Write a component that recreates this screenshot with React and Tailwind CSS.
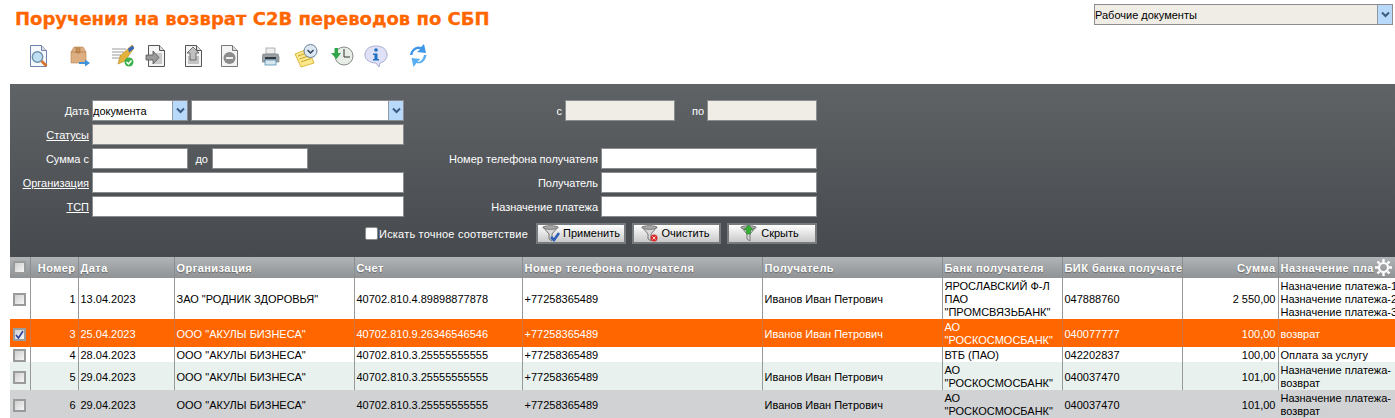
const font = { fontFamily: '"Liberation Sans", Tahoma, sans-serif' };

const ArrowBox = () => (
  <span className="flex w-[15px] shrink-0 items-center justify-center self-stretch border-l border-[#8f9aa3] bg-[#b9d9fb]">
    <svg width="9" height="7" viewBox="0 0 9 7">
      <path d="M1 1.5 4.5 5 8 1.5" fill="none" stroke="#3d5a80" strokeWidth="2" />
    </svg>
  </span>
);

const Field = ({ className = "", muted, text, arrow }) => (
  <div
    className={`flex h-[21px] shrink-0 items-center border border-[#8a8d8f] text-[11px] text-black ${
      muted ? "bg-[#f0ede6]" : "bg-white"
    } ${className}`}
  >
    <span className="flex-1 overflow-hidden whitespace-nowrap pt-[2px]">{text}</span>
    {arrow && <ArrowBox />}
  </div>
);

const Label = ({ children, link, className = "" }) => (
  <span
    className={`shrink-0 whitespace-nowrap pt-[2px] text-right text-[11px] text-white ${
      link ? "underline" : ""
    } ${className}`}
  >
    {children}
  </span>
);

const Doc = ({ children, stroke = "#6b6b6b", fill = "#f4f4f4" }) => (
  <>
    <path d="M3.5 1.500h11l5 5v16h-16z" fill={fill} stroke={stroke} />
    <path d="M14.500 1.500v5h5" fill="#dcdcdc" stroke={stroke} />
    {children}
  </>
);

const toolbar = [
  {
    gap: "ml-[12px]",
    svg: (
      <Doc stroke="#6f83ab" fill="#f5f8fc">
        <circle cx="10.500" cy="13" r="5.200" fill="#bfe0f5" stroke="#6d8fa8" strokeWidth="1.400" />
        <path d="m14.500 17 5 5" stroke="#d9722b" strokeWidth="2.600" />
      </Doc>
    ),
  },
  {
    gap: "ml-[19px]",
    svg: (
      <>
        <path d="M1 8 4 3h9l3 5v11H1z" fill="#dcae80" stroke="#b98552" strokeWidth="0.600" />
        <path d="M1 8h15M6 3v6h4V3" fill="#c98f58" stroke="#a97745" strokeWidth="0.600" />
        <path d="M9 18h6v-2.500l5 3.500-5 3.500V20H9z" fill="#3f93dc" />
      </>
    ),
  },
  {
    gap: "ml-[17px]",
    svg: (
      <>
        <path d="M1 5h14M1 8h12M1 11h9M1 14h7" stroke="#9a9a9a" />
        <path d="M21 1 9 12l-2 8 7-3L23 4z" fill="#e3b23c" stroke="#b58a22" strokeWidth="0.600" />
        <path d="m17 4.500 5-3 1 3-5 4z" fill="#3765b5" />
        <circle cx="18" cy="18" r="4.500" fill="#3cb04a" />
        <path d="m15.500 18 2 2 3-3.500" fill="none" stroke="#fff" strokeWidth="1.500" />
      </>
    ),
  },
  {
    gap: "ml-[10px]",
    svg: (
      <Doc stroke="#555">
        <rect x="9" y="9" width="8" height="11" fill="#c9c9c9" />
        <path d="M1 11h7V7l6 6.500L8 20v-4H1z" fill="#9a9a9a" stroke="#555" strokeWidth="0.800" />
      </Doc>
    ),
  },
  {
    gap: "ml-[13px]",
    svg: (
      <Doc stroke="#555">
        <rect x="6" y="12" width="11" height="8" fill="#c4c4c4" />
        <path d="M8 16V9H5l6-6 6 6h-3v7z" fill="#c0c0c0" stroke="#555" strokeWidth="0.800" />
      </Doc>
    ),
  },
  {
    gap: "ml-[12px]",
    svg: (
      <Doc stroke="#777">
        <circle cx="11.500" cy="14" r="6" fill="#8c8c8c" />
        <path d="M8 14h7" stroke="#eee" strokeWidth="2" />
      </Doc>
    ),
  },
  {
    gap: "ml-[20px]",
    svg: (
      <>
        <rect x="4" y="4" width="9" height="6" fill="#eee" stroke="#888" strokeWidth="0.600" />
        <path d="M1 10h15l1 3v5H0v-5z" fill="#9aa1a6" stroke="#777" strokeWidth="0.600" />
        <rect x="3" y="16" width="11" height="5" fill="#d8e6f0" stroke="#3f7fa8" strokeWidth="0.700" />
        <rect x="3" y="13" width="11" height="2" fill="#33383c" />
      </>
    ),
  },
  {
    gap: "ml-[8px]",
    svg: (
      <>
        <path d="M1 10 14 5l6 14-13 4z" fill="#fbe88c" stroke="#dcb93f" />
        <path d="m4 12 10-3.500M5.500 15l10-3.500M7 18l10-3.500" stroke="#c9a52e" />
        <circle cx="16.500" cy="7" r="6.500" fill="#dbe7f3" stroke="#6c7f96" />
        <path d="m13.500 6 3 3 3-3" fill="none" stroke="#33455e" strokeWidth="1.500" />
      </>
    ),
  },
  {
    gap: "ml-[12px]",
    svg: (
      <>
        <circle cx="14" cy="12" r="9" fill="#e8ede8" stroke="#7f8c84" />
        <path d="M14 5v8h6" fill="none" stroke="#333" />
        <path d="M8 4v5h3l-4.500 6L1 9h3.500V4z" fill="#2fa64a" />
      </>
    ),
  },
  {
    gap: "ml-[10px]",
    svg: (
      <>
        <path d="M12 2c6 0 11 3 11 9 0 4-3 7-7 8l-1 4-3-4C6 19 1 16 1 11c0-6 5-9 11-9z" fill="#dfe2f7" stroke="#a9aed0" />
        <circle cx="12" cy="6" r="1.800" fill="#1f6fc0" />
        <path d="M9 9.500h4.500V15H15v1.500H9V15h1.500v-4H9z" fill="#1f6fc0" />
      </>
    ),
  },
  {
    gap: "ml-[21px]",
    svg: (
      <>
        <path d="M1 11C2 5 7 1 12 3l3-3 2 9-9-1 3-2.500C8 4 4 7 3.500 11z" fill="#3f97ea" />
        <path d="M17.500 11c-1 6-5 9.500-10 8l-3 4-2-9 9 1-3 2.500c3 1 5.500-2 6.500-6.500z" fill="#5aaef2" />
      </>
    ),
  },
];

const Funnel = ({ badge }) => (
  <svg width="20" height="18" viewBox="0 0 20 18" className="shrink-0">
    <path d="M1 2h15l-6 7v7l-3-2V9z" fill="#d8d8d8" stroke="#777" />
    <ellipse cx="8.500" cy="2.500" rx="7.500" ry="1.800" fill="#a9a9a9" stroke="#777" />
    {badge === "check" && <path d="m9 12 3 3 5-7" fill="none" stroke="#2d5fb5" strokeWidth="2.500" />}
    {badge === "clear" && (
      <>
        <circle cx="13" cy="13" r="3.500" fill="#d92b2b" />
        <path d="m11.500 11.500 3 3m0-3-3 3" stroke="#fff" strokeWidth="0.800" />
      </>
    )}
    {badge === "up" && <path d="M8.500 0 13 5h-2.500v4h-4V5H4z" fill="#35b035" stroke="#1f7a1f" strokeWidth="0.500" />}
  </svg>
);

const Button = ({ children, badge, className = "" }) => (
  <div
    className={`flex h-[21px] items-center justify-center gap-px border-2 border-[#777b7e] bg-gradient-to-b from-white to-[#c9c9c9] text-[11px] text-black ${className}`}
  >
    <Funnel badge={badge} />
    {children}
  </div>
);

const Check = ({ checked }) => (
  <span className="flex h-[13px] w-[13px] items-center justify-center border-2 border-[#9a9b9b] bg-gradient-to-br from-[#cfcfcf] to-[#f7f7f7]">
    {checked && (
      <svg width="9" height="9" viewBox="0 0 9 9">
        <path d="m1 5 2.500 3L8 1" fill="none" stroke="#2b3f9e" strokeWidth="1.600" />
      </svg>
    )}
  </span>
);

const Gear = () => (
  <svg width="17" height="17" viewBox="0 0 17 17">
    <circle cx="8.500" cy="8.500" r="4.500" fill="none" stroke="#fff" strokeWidth="2.200" />
    <path
      d="M8.500 0v3M8.500 14v3M0 8.500h3M14 8.500h3M2.500 2.500l2 2M12.500 12.500l2 2M14.500 2.500l-2 2M4.500 12.500l-2 2"
      stroke="#fff"
      strokeWidth="2.400"
    />
  </svg>
);

const headers = [
  { t: "Номер", cls: "text-right" },
  { t: "Дата" },
  { t: "Организация" },
  { t: "Счет" },
  { t: "Номер телефона получателя" },
  { t: "Получатель" },
  { t: "Банк получателя" },
  { t: "БИК банка получателя" },
  { t: "Сумма", cls: "text-right" },
];

const rows = [
  {
    h: "h-[41px]",
    tone: "bg-white text-black",
    line: "border-[#999]",
    n: 1,
    date: "13.04.2023",
    org: 'ЗАО "РОДНИК ЗДОРОВЬЯ"',
    acc: "40702.810.4.89898877878",
    person: "Иванов Иван Петрович",
    bank: ["ЯРОСЛАВСКИЙ Ф-Л", "ПАО", '"ПРОМСВЯЗЬБАНК"'],
    bik: "047888760",
    sum: "2 550,00",
    note: ["Назначение платежа-1", "Назначение платежа-2", "Назначение платежа-3"],
  },
  {
    h: "h-[28px]",
    tone: "bg-[#ff6600] text-white",
    line: "border-[#d9743a]",
    n: 3,
    checked: true,
    date: "25.04.2023",
    org: 'ООО "АКУЛЫ БИЗНЕСА"',
    acc: "40702.810.9.26346546546",
    person: "Иванов Иван Петрович",
    bank: ["АО", '"РОСКОСМОСБАНК"'],
    bik: "040077777",
    sum: "100,00",
    note: ["возврат"],
  },
  {
    h: "h-[15px]",
    tone: "bg-white text-black",
    line: "border-[#999]",
    n: 4,
    date: "28.04.2023",
    org: 'ООО "АКУЛЫ БИЗНЕСА"',
    acc: "40702.810.3.25555555555",
    person: "",
    bank: ["ВТБ (ПАО)"],
    bik: "042202837",
    sum: "100,00",
    note: ["Оплата за услугу"],
  },
  {
    h: "h-[28px]",
    tone: "bg-[#e8f1ee] text-black",
    line: "border-[#999]",
    n: 5,
    date: "29.04.2023",
    org: 'ООО "АКУЛЫ БИЗНЕСА"',
    acc: "40702.810.3.25555555555",
    person: "Иванов Иван Петрович",
    bank: ["АО", '"РОСКОСМОСБАНК"'],
    bik: "040037470",
    sum: "101,00",
    note: ["Назначение платежа-", "возврат"],
  },
  {
    h: "h-[28px]",
    tone: "bg-[#d0d2d4] text-black",
    line: "border-[#d0d2d4]",
    n: 6,
    date: "29.04.2023",
    org: 'ООО "АКУЛЫ БИЗНЕСА"',
    acc: "40702.810.3.25555555555",
    person: "Иванов Иван Петрович",
    bank: ["АО", '"РОСКОСМОСБАНК"'],
    bik: "040037470",
    sum: "101,00",
    note: ["Назначение платежа-", "возврат"],
  },
];

const Cell = ({ line, className = "", children }) => (
  <td className={`overflow-hidden whitespace-nowrap border-l px-[2px] pb-0 pt-[2px] align-middle ${line} ${className}`}>
    {children}
  </td>
);

export default function App() {
  return (
    <div className="h-[418px] w-[1395px] overflow-hidden bg-white leading-[13px]" style={font}>
      <div className="flex h-[84px]">
        <div className="flex-1 pl-[15px]">
          <h1
            className="pt-[8px] text-[18px] font-bold leading-[22px] text-[#ff6600] [-webkit-text-stroke:0.3px_#ff6600]"
            style={{ fontFamily: '"DejaVu Sans", sans-serif' }}
          >
            Поручения на возврат C2B переводов по СБП
          </h1>
          <div className="mt-[14px] flex">
            {toolbar.map((item, i) => (
              <svg key={i} width="24" height="24" viewBox="0 0 24 24" className={`shrink-0 ${item.gap}`}>
                {item.svg}
              </svg>
            ))}
          </div>
        </div>
        <Field className="mr-[2px] mt-[4px] w-[299px]" muted text="Рабочие документы" arrow />
      </div>

      <div className="ml-[10px] h-[173px] bg-gradient-to-b from-[#5f6366] to-[#464a4e] pt-[16px]">
        <div className="flex h-[21px] items-center">
          <Label className="w-[79px]">Дата</Label>
          <Field className="ml-[3px] w-[96px]" text="документа" arrow />
          <Field className="ml-[3px] w-[213px]" arrow />
          <Label className="w-[158px]">с</Label>
          <Field className="ml-[3px] w-[110px]" muted />
          <Label className="w-[29px]">по</Label>
          <Field className="ml-[3px] w-[110px]" muted />
        </div>
        <div className="mt-[3px] flex h-[21px] items-center">
          <Label link className="w-[79px]">Статусы</Label>
          <Field className="ml-[3px] w-[312px]" muted />
        </div>
        <div className="mt-[3px] flex h-[21px] items-center">
          <Label className="w-[79px]">Сумма с</Label>
          <Field className="ml-[3px] w-[96px]" />
          <Label className="w-[20px]">до</Label>
          <Field className="ml-[4px] w-[96px]" />
          <Label className="w-[290px]">Номер телефона получателя</Label>
          <Field className="ml-[3px] w-[216px]" />
        </div>
        <div className="mt-[3px] flex h-[21px] items-center">
          <Label link className="w-[79px]">Организация</Label>
          <Field className="ml-[3px] w-[312px]" />
          <Label className="w-[194px]">Получатель</Label>
          <Field className="ml-[3px] w-[216px]" />
        </div>
        <div className="mt-[3px] flex h-[21px] items-center">
          <Label link className="w-[79px]">ТСП</Label>
          <Field className="ml-[3px] w-[312px]" />
          <Label className="w-[194px]">Назначение платежа</Label>
          <Field className="ml-[3px] w-[216px]" />
        </div>
        <div className="mt-[6px] flex h-[21px] items-center">
          <span className="ml-[355px] h-[13px] w-[13px] rounded-[2px] border border-[#8a8d8f] bg-white" />
          <Label className="ml-px w-[149px] tracking-[0.2px]">Искать точное соответствие</Label>
          <Button badge="check" className="ml-[8px] w-[90px]">Применить</Button>
          <Button badge="clear" className="ml-[6px] w-[89px] pr-[3px]">Очистить</Button>
          <Button badge="up" className="ml-[6px] w-[90px] pr-[5px]">Скрыть</Button>
        </div>
      </div>

      <table className="ml-[10px] w-[1385px] table-fixed border-collapse text-[11px] leading-[13px]">
        <colgroup>
          <col className="w-[20px]" />
          <col className="w-[48px]" />
          <col className="w-[96px]" />
          <col className="w-[180px]" />
          <col className="w-[168px]" />
          <col className="w-[240px]" />
          <col className="w-[180px]" />
          <col className="w-[120px]" />
          <col className="w-[120px]" />
          <col className="w-[96px]" />
          <col className="w-[117px]" />
        </colgroup>
        <thead>
          <tr className="h-[21px] bg-gradient-to-b from-[#b1b4b7] to-[#909396] text-white">
            <th className="p-0 pl-[3px] align-middle font-normal">
              <Check />
            </th>
            {headers.map((h) => (
              <th
                key={h.t}
                className={`overflow-hidden whitespace-nowrap border-l border-[#8b8e91] px-[2px] pt-[2px] text-left font-bold tracking-[0.45px] [text-shadow:0_1px_1px_#666] ${h.cls || ""}`}
              >
                {h.t}
              </th>
            ))}
            <th className="border-l border-[#8b8e91] px-[2px] text-left font-bold tracking-[0.45px] [text-shadow:0_1px_1px_#666]">
              <div className="flex items-center justify-between">
                <span className="overflow-hidden whitespace-nowrap pt-[2px]">Назначение пла</span>
                <span className="mr-[1px] shrink-0">
                  <Gear />
                </span>
              </div>
            </th>
          </tr>
        </thead>
        <tbody>
          {rows.map((r) => (
            <tr key={r.n} className={`${r.h} ${r.tone}`}>
              <td className="p-0 pl-[3px] pt-[2px] align-middle">
                <Check checked={r.checked} />
              </td>
              <Cell line={r.line} className="text-right">{r.n}</Cell>
              <Cell line={r.line}>{r.date}</Cell>
              <Cell line={r.line}>{r.org}</Cell>
              <Cell line={r.line}>{r.acc}</Cell>
              <Cell line={r.line}>+77258365489</Cell>
              <Cell line={r.line}>{r.person}</Cell>
              <Cell line={r.line}>
                {r.bank.map((b) => (
                  <div key={b}>{b}</div>
                ))}
              </Cell>
              <Cell line={r.line}>{r.bik}</Cell>
              <Cell line={r.line} className="text-right">{r.sum}</Cell>
              <Cell line={r.line}>
                {r.note.map((b) => (
                  <div key={b}>{b}</div>
                ))}
              </Cell>
            </tr>
          ))}
        </tbody>
      </table>
    </div>
  );
}
